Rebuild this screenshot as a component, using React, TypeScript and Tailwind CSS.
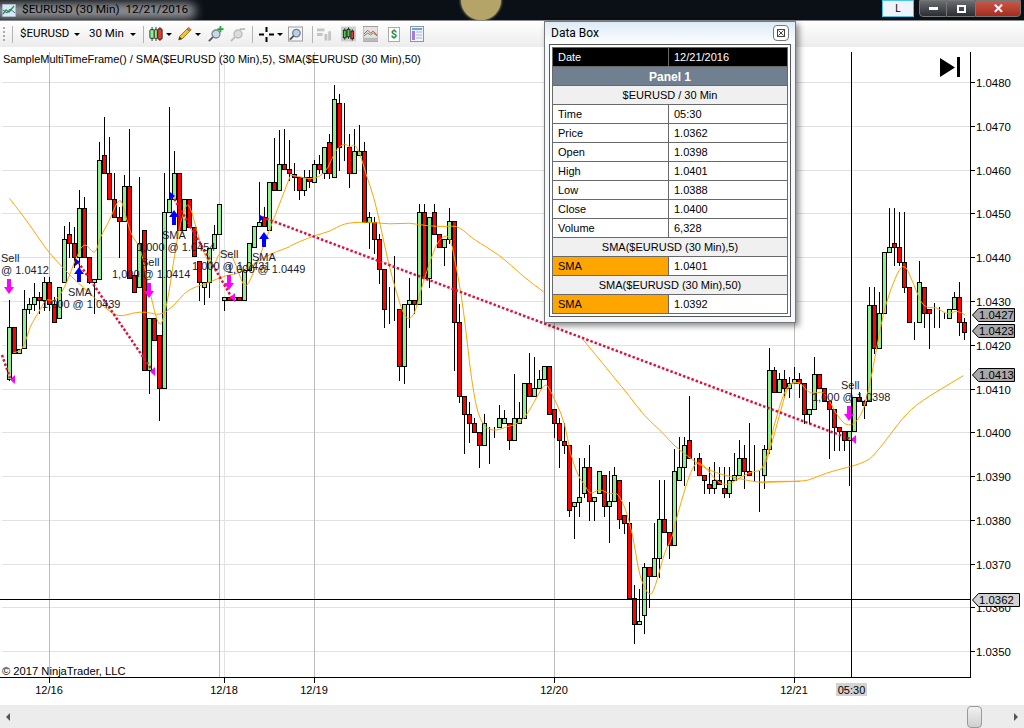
type Bar = [string, number, number, number, number];

const barsA: Bar[] = [
  ["g",740,897,660,900],["r",740,820,740,820],["g",807,820,807,820],["g",688,805,630,805],["g",673,688,655,700],
  ["g",650,673,610,690],["r",650,660,635,700],["g",607,660,590,690],["r",607,672,590,690],["r",672,727,650,727],
  ["g",622,715,622,715],["g",478,607,437,607],["r",463,490,425,530],["r",490,530,440,560],["g",385,530,330,560],
  ["r",385,530,350,530],["r",530,607,530,610],["g",597,607,597,700],["g",240,597,187,597],["r",226,280,110,280],
  ["r",280,358,170,358],["r",358,412,280,412],["r",412,424,380,530],["g",319,424,285,424],["r",319,595,148,595],
  ["r",585,635,585,635],["g",490,622,292,622],["r",451,870,451,870],["g",715,870,715,938],["r",715,780,715,780],
  ["r",766,925,766,1020],["g",397,925,280,925],["g",358,397,82,397],["g",280,358,213,358],["r",280,450,280,450],
  ["g",358,450,358,450],["r",358,440,358,440],["r",440,528,440,528],["r",544,607,544,660],["g",607,622,607,672],
  ["g",503,607,503,650],["g",463,503,435,503],["g",373,463,373,463],["g",650,660,650,690],["r",650,660,650,660],
  ["g",650,660,650,660],["r",650,660,650,660],["g",570,660,570,660],["g",490,570,490,570],["g",438,502,438,502],
  ["g",425,438,305,438],["r",412,438,380,438],["g",307,450,307,450],["r",307,331,175,331],["g",253,331,150,331],
  ["r",253,268,148,268],["r",268,280,180,300],
];

const barsB: Bar[] = [
  ["r",283,292,250,330],["r",292,331,292,358],["g",292,331,270,345],["r",292,303,270,320],["g",253,307,240,307],
  ["r",253,268,225,280],["g",202,280,202,295],["r",187,280,162,295],["g",58,292,15,292],["r",70,202,42,270],
  ["r",202,202,70,240],["r",202,280,163,320],["g",214,280,148,280],["g",214,226,135,226],["r",214,425,185,425],
  ["g",412,425,395,505],["r",425,478,410,518],["r",478,568,462,608],["r",568,688,568,740],["r",688,688,622,730],
  ["r",688,688,528,720],["r",688,858,688,900],["g",673,858,673,910],["g",660,673,595,740],["r",660,673,660,700],
  ["g",397,673,372,673],["r",397,595,372,595],["g",412,595,412,622],["r",397,463,372,463],["r",463,502,463,502],
  ["g",478,502,478,555],["g",424,478,385,490],["r",424,727,424,870],["r",727,949,672,965],["r",949,1003,949,1120],
  ["r",1003,1030,965,1085],["r",1030,1055,1015,1055],["r",1055,1096,1055,1160],["g",1030,1096,1003,1096],["r",1042,1042,1042,1148],
  ["r",1042,1042,1042,1070],["g",1015,1042,975,1042],["g",1015,1030,990,1030],["r",1030,1080,1030,1108],["g",1015,1080,882,1080],
  ["g",1015,1030,965,1030],["g",910,1015,910,1015],["r",910,949,820,949],["g",925,949,832,949],["g",897,925,870,925],
  ["g",858,897,858,897],["r",858,1003,858,1003],
];

const barsC: Bar[] = [
  ["r",208,250,208,290],["r",250,300,235,380],["r",302,316,250,340],["r",316,511,316,527],["g",485,498,485,593],
  ["g",472,485,355,527],["g",380,460,355,472],["r",380,484,316,540],["g",472,484,472,540],["g",394,460,394,460],
  ["r",406,498,406,527],["g",484,498,394,605],["g",406,484,380,484],["r",420,538,420,565],["r",526,550,526,578],
  ["r",550,775,485,775],["r",775,853,735,908],["g",842,853,748,853],["g",682,826,670,880],["r",682,708,682,800],
  ["g",655,708,550,708],["g",538,655,420,710],["r",538,577,420,577],["r",577,615,577,655],["g",394,615,328,615],
  ["g",380,420,290,420],["g",316,380,290,435],["r",301,354,168,354],["r",354,354,354,390],["r",354,406,340,406],
  ["r",406,420,406,460],["r",433,445,380,460],["g",420,445,365,460],["r",420,432,380,432],["r",445,460,380,472],
  ["g",420,460,380,472],["g",406,420,340,420],["g",355,406,300,406],["r",355,394,315,445],["r",394,406,250,406],
  ["r",394,394,315,420],["r",394,394,394,512],
];

const barsD: Bar[] = [
  ["g",748,826,735,865],["g",511,748,445,760],["r",511,577,500,577],["g",538,577,520,577],["r",538,564,510,590],
  ["g",550,564,530,590],["g",538,550,500,550],["r",538,550,520,590],["r",550,642,550,670],["g",628,642,628,670],
  ["g",523,628,472,628],["r",523,564,523,564],["r",564,604,564,604],["r",604,628,604,775],["r",628,682,628,750],
  ["r",682,694,682,750],["r",694,720,694,750],["g",694,720,694,855],["g",590,694,590,694],["r",590,604,575,604],
  ["r",604,616,604,655],["g",314,604,262,604],["r",314,445,262,460],["g",340,445,275,445],["g",157,340,157,340],
  ["g",142,157,25,157],["r",130,142,25,195],["r",142,185,35,195],["r",185,262,35,275],["r",262,367,262,367],
  ["r",367,367,367,418],["g",247,367,183,367],["r",262,340,262,380],["r",328,340,328,445],["r",340,340,310,380],
  ["r",340,340,320,380],["r",355,355,340,355],["g",328,355,328,355],["g",290,328,275,328],["r",290,367,247,405],
  ["r",367,395,355,418],
];

const fast: [number, number, string][] = [
  [0, 80, "40,818 60,815 75,790 90,740 105,715 125,680 140,655 160,665 178,650 200,610 225,540 253,482 285,530 300,470 325,430 360,345 375,400 395,470 415,490 430,540 450,640 478,750 495,700 510,620 530,480 555,375 570,375 590,450 610,520 640,570 658,512 690,515 710,560 735,632 760,580 790,500 820,420 870,290"],
  [290, 80, "0,285 30,290 58,298 90,290 115,265 135,210 165,188 180,205 193,190 210,220 230,290 250,345 270,430 295,550 320,640 345,718 372,712 395,620 425,530 445,480 478,460 495,540 520,680 545,910 570,1030 610,1055 650,1040 690,1030 720,990 765,905 780,930"],
  [550, 340, "0,150 20,190 45,250 60,340 85,410 105,435 120,465 150,445 180,465 200,455 225,500 250,590 268,710 298,772 315,745 345,630 365,600 380,530 430,365 460,372 500,425 530,437 560,420 600,395 640,392 660,330 690,220 715,130 750,128"],
  [760, 200, "0,810 15,800 40,680 80,550 120,545 150,585 195,570 225,640 265,685 305,650 330,555 365,360 390,270 430,180 460,250 490,325 530,320 560,345 590,330 615,345"],
];

const slow: [number, number, string][] = [
  [0, 80, "28,355 60,395 100,450 140,510 190,565 230,605 270,640 310,680 355,712 400,698 440,695 480,707 520,680 560,630 620,610 680,585 720,580 790,530 870,500"],
  [290, 80, "0,498 60,470 120,455 160,430 230,425 300,433 360,428 410,438 470,440 495,437 520,450 550,478 630,525 700,590 760,635"],
  [550, 340, "100,0 150,60 190,110 240,170 280,225 340,280 370,315 415,350 470,390 540,410 625,428 660,424 750,424"],
  [760, 200, "0,847 130,845 160,835 210,815 310,790 345,765 430,650 480,605 610,527"],
];

const prices = [
  [82, "1.0480"], [126, "1.0470"], [170, "1.0460"], [213, "1.0450"], [257, "1.0440"], [301, "1.0430"], [345, "1.0420"],
  [389, "1.0410"], [432, "1.0400"], [476, "1.0390"], [520, "1.0380"], [564, "1.0370"], [607, "1.0360"], [651, "1.0350"],
] as const;

const dates = [[49, "12/16"], [224, "12/18"], [314, "12/19"], [554, "12/20"], [794, "12/21"]] as const;

const labels = [
  [1, 262, "Sell"], [1, 274, "@ 1.0412"],
  [68, 296, "SMA"], [42, 308, "1,000 @ 1.0439"],
  [141, 266, "Sell"], [112, 278, "1,000 @ 1.0414"],
  [162, 239, "SMA"], [137, 251, "1,000 @ 1.0454"],
  [220, 258, "Sell"], [192, 270, "1,000 @ 1.0431"],
  [252, 261, "SMA"], [227, 273, "1,000 @ 1.0449"],
  [841, 389, "Sell"], [812, 401, "1,000 @ 1.0398"],
] as const;

const upArrows = [[79, 267], [174, 210], [264, 232]];
const downArrows = [[9, 279], [149, 283], [229, 275], [849, 406]];
const entries = [[75, 258], [170, 192], [259, 214]];
const exits = [[15, 375], [155, 367], [235, 293], [856, 435]];

const flags = [
  [308, 42, "#a9a9a9", "1.0427"],
  [324, 42, "#a9a9a9", "1.0423"],
  [368, 42, "#a9a9a9", "1.0413"],
  [593, 47, "#d3d3d3", "1.0362"],
] as const;

// rounds the corners of the hand read SMA points
const smooth = (ox: number, oy: number, s: string) => {
  const p = s.split(" ").map((q) => {
    const [u, v] = q.split(",").map(Number);
    return [ox + u / 3, oy + v / 3];
  });
  let d = `M${p[0][0]} ${p[0][1]}`;
  for (let i = 1; i < p.length - 1; i++) {
    d += `Q${p[i][0]} ${p[i][1]} ${(p[i][0] + p[i + 1][0]) / 2} ${(p[i][1] + p[i + 1][1]) / 2}`;
  }
  const last = p[p.length - 1];
  return `${d}L${last[0]} ${last[1]}`;
};

const Candles = ({ bars, start, oy }: { bars: Bar[]; start: number; oy: number }) => (
  <g>
    {bars.map(([c, t, b, wt, wb], i) => {
      const x = 9.5 + 5 * (start + i);
      const y1 = Math.round(oy + t / 3) + 0.5;
      const y2 = Math.round(oy + b / 3) + 0.5;
      return (
        <g key={i}>
          <line x1={x} x2={x} y1={Math.round(oy + wt / 3)} y2={Math.round(oy + wb / 3) + 1} stroke="#000" />
          <rect x={x - 2} y={y1} width={4} height={y2 - y1} fill={c === "g" ? "#90ee90" : "#ff0000"} stroke="#000" />
        </g>
      );
    })}
  </g>
);

const Caret = () => <span className="mx-[3px] h-0 w-0 border-x-[3px] border-t-[3px] border-x-transparent border-t-black" />;

const Chart = () => (
  <svg width={1024} height={658} viewBox="0 47 1024 658" className="block" fontFamily="'Liberation Sans', Arial, sans-serif" fontSize={11}>
    {prices.map(([y]) => (
      <line key={y} x1={2} x2={970} y1={y + 0.5} y2={y + 0.5} stroke="#e2e2e2" />
    ))}
    {[49, 219, 314, 554, 794].map((x) => (
      <line key={x} x1={x + 0.5} x2={x + 0.5} y1={52} y2={677} stroke="#bdbdbd" />
    ))}
    <line x1={224.5} x2={224.5} y1={52} y2={677} stroke="#e2e2e2" />

    <text x={3} y={63}>
      SampleMultiTimeFrame() / SMA($EURUSD (30 Min),5), SMA($EURUSD (30 Min),50)
    </text>

    <Candles bars={barsA} start={0} oy={80} />
    <Candles bars={barsB} start={57} oy={80} />
    <Candles bars={barsC} start={109} oy={340} />
    <Candles bars={barsD} start={151} oy={200} />

    {slow.concat(fast).map(([ox, oy, s], i) => (
      <path key={i} d={smooth(ox, oy, s)} fill="none" stroke="#ffa500" strokeWidth={1} />
    ))}

    {[
      [2, 355, 10, 378],
      [78, 262, 152, 370],
      [172, 195, 232, 298],
      [262, 217, 853, 440],
    ].map(([x1, y1, x2, y2]) => (
      <line key={x1} x1={x1} y1={y1} x2={x2} y2={y2} stroke="#dc143c" strokeWidth={2.5} strokeDasharray="2.5 2" />
    ))}

    {upArrows.map(([x, y]) => (
      <path key={x} d={`M${x} ${y}l5 7h-3v8h-4v-8h-3z`} fill="#0000ff" />
    ))}
    {downArrows.map(([x, y]) => (
      <path key={x} d={`M${x} ${y + 15}l5 -7h-3v-8h-4v8h-3z`} fill="#ff00ff" />
    ))}
    {entries.map(([x, y]) => (
      <path key={x} d={`M${x} ${y}l5 4l-5 4z`} fill="#0000ff" />
    ))}
    {exits.map(([x, y]) => (
      <path key={x} d={`M${x} ${y}l-5 4.5l5 4.5z`} fill="#ff00ff" />
    ))}

    {labels.map(([x, y, t], i) => (
      <text key={i} x={x} y={y} fill="#1a1a2e">
        {t}
      </text>
    ))}
    <text x={2} y={675} fontSize={11.2}>© 2017 NinjaTrader, LLC</text>

    <line x1={851.5} x2={851.5} y1={52} y2={677} stroke="#000" />
    <line x1={0} x2={970} y1={599.5} y2={599.5} stroke="#000" />
    <line x1={970.5} x2={970.5} y1={52} y2={678} stroke="#000" />
    <line x1={0} x2={971} y1={677.5} y2={677.5} stroke="#000" />

    <path d="M940 58l15 9.5l-15 9.5z" />
    <rect x={957} y={57} width={3} height={20} />

    {prices.map(([y, t]) => (
      <g key={y}>
        <line x1={970} x2={975} y1={y + 0.5} y2={y + 0.5} stroke="#000" />
        <text x={976} y={y + 4.5} fontSize={11.4}>{t}</text>
      </g>
    ))}
    {dates.map(([x, t]) => (
      <g key={x}>
        <line x1={x + 0.5} x2={x + 0.5} y1={677} y2={683} stroke="#000" />
        <text x={x} y={694} textAnchor="middle">{t}</text>
      </g>
    ))}
    <rect x={836} y={683} width={31} height={13} fill="#d3d3d3" />
    <text x={851.5} y={694} textAnchor="middle">05:30</text>

    {flags.map(([y, w, bg, t]) => (
      <g key={t}>
        <path d={`M972 ${y + 6.5}l6 -6.5h${w - 6}v13h-${w - 6}z`} fill={bg} stroke="#000" transform="translate(0.5 0.5)" />
        <text x={979} y={y + 11} fontSize={11.4}>{t}</text>
      </g>
    ))}
  </svg>
);

const rows: [string, string][] = [
  ["Time", "05:30"],
  ["Price", "1.0362"],
  ["Open", "1.0398"],
  ["High", "1.0401"],
  ["Low", "1.0388"],
  ["Close", "1.0400"],
  ["Volume", "6,328"],
];

const Cell = ({ children, className = "bg-white" }: { children: React.ReactNode; className?: string }) => (
  <div className={`flex h-[18px] items-center pl-[5px] ${className}`}>{children}</div>
);

const Wide = ({ children }: { children: React.ReactNode }) => (
  <div className="col-span-2 flex h-[18px] items-center justify-center bg-[#f0f0f0] pt-px">{children}</div>
);

const DataBox = () => (
  <div className="absolute top-[21px] left-[544px] w-[252px] h-[302px] border border-[#777] bg-[#f4f9fd] shadow-[3px_3px_6px_rgba(0,0,0,0.45)]">
    <div className="flex h-[22px] items-center justify-between pr-[6px] pl-[6px] bg-gradient-to-b from-[#dcebf6] to-white text-[12px] font-['Roboto',sans-serif] text-black">
      <span>Data Box</span>
      <span className="flex h-4 w-4 items-center justify-center rounded-sm border border-[#777] bg-white">
        <svg width={8} height={8} viewBox="0 0 8 8">
          <rect x={0.5} y={0.5} width={7} height={7} fill="none" stroke="#444" />
          <path d="M1.5 1.5l5 5M6.5 1.5l-5 5" stroke="#444" />
        </svg>
      </span>
    </div>
    <div className="mx-1 border border-[#555] bg-white p-[2px]">
      <div className="grid grid-cols-[115px_1fr] gap-px border border-[#696969] bg-[#696969] font-['Liberation_Sans',Arial,sans-serif] text-[11px] text-black">
        <Cell className="bg-black text-white">Date</Cell>
        <Cell className="bg-black text-white">12/21/2016</Cell>
        <div className="col-span-2 flex h-[18px] items-center justify-center bg-[#708090] pt-px text-[12px] font-bold text-white">Panel 1</div>
        <Wide>$EURUSD / 30 Min</Wide>
        {rows.map(([k, v]) => [<Cell key={k}>{k}</Cell>, <Cell key={k + "v"}>{v}</Cell>])}
        <Wide>SMA($EURUSD (30 Min),5)</Wide>
        <Cell className="bg-[#ffa500]">SMA</Cell>
        <Cell>1.0401</Cell>
        <Wide>SMA($EURUSD (30 Min),50)</Wide>
        <Cell className="bg-[#ffa500]">SMA</Cell>
        <Cell>1.0392</Cell>
      </div>
    </div>
  </div>
);

const TitleBar = () => (
  <div className="relative flex h-[21px] items-center overflow-hidden border-b border-[#8a8a8a] bg-[#0b1016] pl-[2px] font-['Roboto',sans-serif] text-[11.8px]">
    <div className="absolute top-[3px] left-[-8px] h-[16px] w-[204px] rounded-full bg-[#8f9093] blur-[5px]" />
    <div className="absolute top-[-20px] left-[461px] h-[40px] w-[40px] rounded-full bg-[#b4a468] shadow-[0_0_3px_#e8d9a0]" />
    <svg width={14} height={13} viewBox="0 0 14 13" className="relative mr-[6px]">
      <rect width={14} height={13} fill="#dce8f4" stroke="#7a8ea5" />
      <path d="M1 10l3-4l3 2l5-6" fill="none" stroke="#2e9e3c" strokeWidth={1.4} />
      <path d="M1 6l4 3l3-4l5 4" fill="none" stroke="#3a62c8" />
    </svg>
    <span className="relative whitespace-pre text-black">$EURUSD (30 Min)  12/21/2016</span>
    <div className="absolute top-0 right-[3px] flex h-[17px] items-stretch text-white">
      <div className="mr-[5px] flex w-[32px] items-center justify-center border border-[#4cc4e8] bg-[#eef4fa] text-[10px] text-black">L</div>
      <div className="flex w-[28px] items-center justify-center rounded-bl border border-[#777] bg-gradient-to-b from-[#6a6e73] to-[#2b2e33]">
        <span className="h-[3px] w-[9px] bg-white" />
      </div>
      <div className="flex w-[28px] items-center justify-center border-y border-[#777] bg-gradient-to-b from-[#6a6e73] to-[#2b2e33]">
        <span className="h-[8px] w-[9px] border-2 border-white" />
      </div>
      <div className="flex w-[46px] items-center justify-center rounded-br border border-[#777] bg-gradient-to-b from-[#c45a4a] to-[#a82a1c] text-[13px] font-bold leading-none">✕</div>
    </div>
  </div>
);

const Toolbar = () => (
  <div className="flex h-[26px] items-center bg-gradient-to-b from-white to-[#ececec] pl-[3px] font-['Roboto',sans-serif] text-[11.5px] text-black">
    <span className="h-[14px] w-[2px] border-l-2 border-dotted border-[#aaa]" />
    <span className="ml-[7px] h-[17px] w-px bg-[#b4b4b4]" />
    <span className="ml-[7px] w-[51px]">$EURUSD</span>
    <Caret />
    <span className="ml-[6px] w-[38px]">30 Min</span>
    <Caret />
    <span className="ml-[4px] h-[17px] w-px bg-[#b4b4b4]" />
    <svg width={14} height={16} viewBox="0 0 16 16" className="ml-[5px]">
      <path d="M3.5 0v16M8 0v16M12.5 0v16" stroke="#222" />
      <rect x={1} y={3} width={5} height={10} rx={1} fill="#90ee90" stroke="#222" />
      <rect x={6} y={3} width={3.5} height={10} rx={1} fill="#90ee90" stroke="#222" />
      <rect x={10} y={2} width={5} height={12} rx={1} fill="#e8392b" stroke="#222" />
    </svg>
    <Caret />
    <svg width={15} height={16} viewBox="0 0 18 18" className="ml-[2px]">
      <path d="M2 16l1-4L12 3l3 3l-9 9z" fill="#f4c430" stroke="#8a6a10" />
      <path d="M12 3l2-2l3 3l-2 2z" fill="#e87a6a" stroke="#8a6a10" />
      <path d="M2 16l1-4l3 3z" fill="#333" />
    </svg>
    <Caret />
    <svg width={16} height={16} viewBox="0 0 18 18" className="ml-[4px]">
      <circle cx={9} cy={9} r={4.5} fill="#c9d8e6" stroke="#7a8794" strokeWidth={1.5} />
      <path d="M5.5 12.5L1 17" stroke="#555" strokeWidth={2} />
      <path d="M14 0v7M10.5 3.5h7" stroke="#1ea83a" strokeWidth={2} />
    </svg>
    <svg width={16} height={16} viewBox="0 0 18 18" className="ml-[6px]">
      <circle cx={9} cy={9} r={4.5} fill="#dcdcdc" stroke="#bbb" strokeWidth={1.5} />
      <path d="M5.5 12.5L1 17" stroke="#bbb" strokeWidth={2} />
      <path d="M11 3.5h6" stroke="#bbb" strokeWidth={2} />
    </svg>
    <span className="ml-[6px] h-[17px] w-px bg-[#b4b4b4]" />
    <svg width={15} height={15} viewBox="0 0 15 15" className="ml-[6px]">
      <path d="M7.5 0v5M7.5 10v5M0 7.5h5M10 7.5h5" stroke="#000" strokeWidth={2} />
    </svg>
    <Caret />
    <svg width={15} height={16} viewBox="0 0 16 16" className="ml-[2px]">
      <rect x={0.5} y={0.5} width={15} height={15} fill="#f4f4f4" stroke="#999" />
      <circle cx={9} cy={7} r={4} fill="#bcd0e4" stroke="#6f8296" strokeWidth={1.4} />
      <path d="M6 10l-4 4" stroke="#555" strokeWidth={2} />
    </svg>
    <span className="ml-[9px] h-[17px] w-px bg-[#b4b4b4]" />
    <svg width={15} height={16} viewBox="0 0 16 16" className="ml-[4px]">
      <path d="M0 2h8v3H0zM0 7h6v3H0zM8 8h3v7H8zM12 5h3v10h-3z" fill="#c4c4c4" />
    </svg>
    <svg width={15} height={16} viewBox="0 0 16 16" className="ml-[9px]">
      <rect width={16} height={16} fill="#cfcfcf" />
      <path d="M4 2v12M8 1v12M12 3v12" stroke="#222" />
      <rect x={2.5} y={4} width={3} height={8} fill="#4bd04b" stroke="#222" />
      <rect x={6.5} y={3} width={3} height={8} fill="#4bd04b" stroke="#222" />
      <rect x={10.5} y={5} width={3} height={8} fill="#e8392b" stroke="#222" />
    </svg>
    <svg width={15} height={16} viewBox="0 0 16 16" className="ml-[7px]">
      <rect width={16} height={16} fill="#e4e4e4" stroke="#999" />
      <path d="M1 8l4-4l3 3l3-2l4 4" fill="none" stroke="#d04040" />
      <path d="M1 10l4-3l3 2l3-2l4 3" fill="none" stroke="#40a040" />
      <rect y={12} width={16} height={4} fill="#bbb" />
    </svg>
    <span className="ml-[10px] flex h-[15px] w-[12px] items-center justify-center border border-[#aaa] bg-white text-[11px] font-bold leading-none text-[#1e8a3a]">$</span>
    <svg width={14} height={16} viewBox="0 0 14 16" className="ml-[10px]">
      <rect x={0.5} y={0.5} width={13} height={15} fill="#f0f4f8" stroke="#8a97a5" />
      <rect x={2} y={2} width={10} height={2} fill="#6aa4dc" />
      <rect x={2} y={5} width={3} height={9} fill="#a878e8" />
      <path d="M6 6h6M6 9h6M6 12h6" stroke="#a9b4c0" />
    </svg>
  </div>
);

const Scrollbar = () => (
  <div className="flex h-[23px] items-center bg-[#ececec]">
    <span className="ml-[6px] h-0 w-0 border-y-[4px] border-r-[4px] border-y-transparent border-r-[#555]" />
    <span className="ml-auto h-[22px] w-[15px] rounded-sm border border-[#9a9a9a] bg-gradient-to-b from-[#f2f2f2] to-[#cfcfcf]" />
    <span className="mr-[6px] ml-[32px] h-0 w-0 border-y-[4px] border-l-[4px] border-y-transparent border-l-[#555]" />
  </div>
);

export default function App() {
  return (
    <div className="relative h-[728px] w-[1024px] overflow-hidden bg-white">
      <TitleBar />
      <Toolbar />
      <Chart />
      <Scrollbar />
      <DataBox />
    </div>
  );
}
